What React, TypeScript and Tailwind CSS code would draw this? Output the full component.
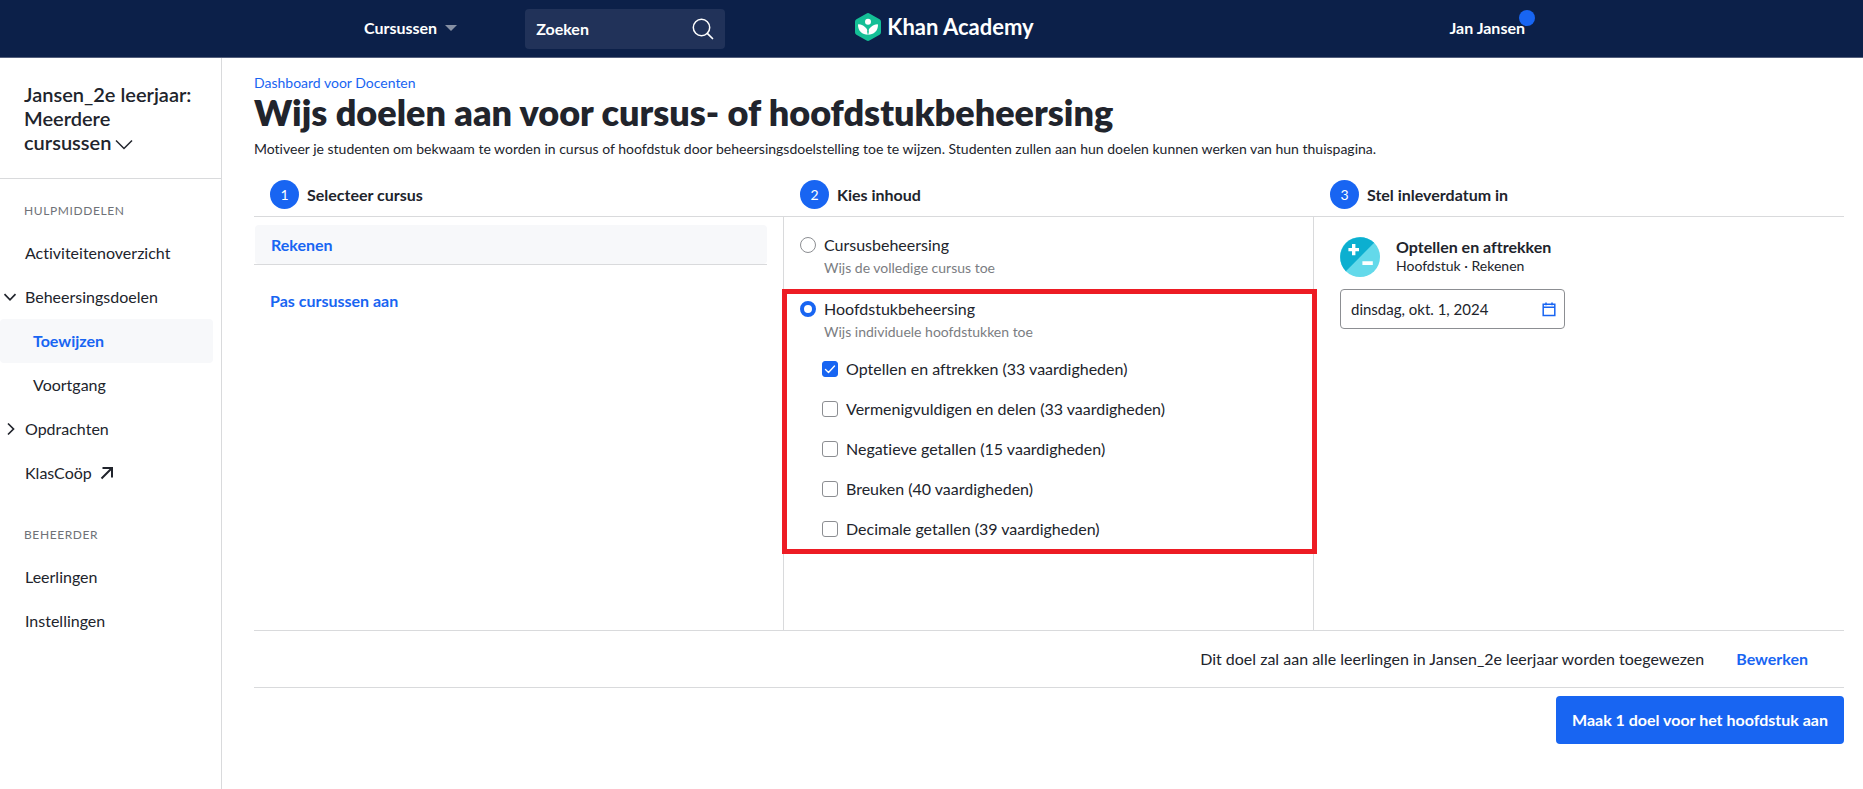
import { useState } from "react";
import type { ReactNode } from "react";

const UNITS = [
  "Optellen en aftrekken (33 vaardigheden)",
  "Vermenigvuldigen en delen (33 vaardigheden)",
  "Negatieve getallen (15 vaardigheden)",
  "Breuken (40 vaardigheden)",
  "Decimale getallen (39 vaardigheden)",
];

function Logo() {
  return (
    <a href="#" className="flex items-center gap-[6px] pb-1 text-[22px] leading-6 font-bold text-white">
      <svg viewBox="0 0 26 28" className="h-7 w-[26px]" aria-hidden="true">
        <path
          d="M11.6.4a2.8 2.8 0 0 1 2.8 0l10.200 5.900a2.800 2.800 0 0 1 1.400 2.400v10.600a2.800 2.800 0 0 1-1.400 2.400l-10.200 5.900a2.800 2.800 0 0 1-2.800 0l-10.200-5.900A2.800 2.800 0 0 1 0 19.300V8.700a2.800 2.800 0 0 1 1.400-2.400z"
          fill="#14bf96"
        />
        <circle cx="13" cy="8.800" r="3" fill="#fff" />
        <path
          d="M13 21.800c-5.800 0-10-4-10-9.800 0-.6.2-.8.800-.7 4.600.6 8 3.300 9.200 7.400 1.200-4.100 4.600-6.800 9.200-7.400.6-.1.800.1.800.7 0 5.800-4.200 9.800-10 9.800z"
          fill="#fff"
        />
        <path d="M13 22.400l-.9-3.600.9-3.300.9 3.300z" fill="#14bf96" />
      </svg>
      <span>Khan Academy</span>
    </a>
  );
}

function Header() {
  return (
    <header className="flex h-[58px] justify-center border-b border-[#545f7c] bg-[#0c2049] pl-[26px]">
      <div className="grid w-full max-w-[1161px] grid-cols-[1fr_auto_1fr] items-center">
        <div className="flex items-center gap-[68px]">
          <button className="flex items-center gap-2 pb-[2px] text-base leading-5 font-bold text-white">
            Cursussen
            <svg viewBox="0 0 12 6" className="h-[6px] w-3" aria-hidden="true">
              <path d="M0 0h12L6 6z" fill="#8690a4" />
            </svg>
          </button>
          <div className="flex h-10 w-[200px] items-center rounded bg-[#213259] px-[11px]">
            <input
              aria-label="Zoeken"
              placeholder="Zoeken"
              className="w-full min-w-0 bg-transparent text-base font-bold text-white outline-none placeholder:text-white"
            />
            <svg viewBox="0 0 22 22" className="h-[22px] w-[22px] shrink-0" fill="none" stroke="#fff" aria-hidden="true">
              <circle cx="9.500" cy="9.500" r="8.200" strokeWidth="1.500" />
              <path d="M15.300 15.300l5.200 5.200" strokeWidth="1.700" strokeLinecap="round" />
            </svg>
          </div>
        </div>
        <Logo />
        <button className="relative justify-self-end pb-[2px] text-base leading-5 font-bold text-white">
          Jan Jansen
          <span className="absolute -top-2 -right-[10px] h-4 w-4 rounded-full bg-[#1865f2]" />
        </button>
      </div>
    </header>
  );
}

function Chevron({ open }: { open: boolean }) {
  return (
    <svg viewBox="0 0 14 14" className="h-[14px] w-[14px]" fill="none" stroke="#21242c" strokeWidth="1.700" aria-hidden="true">
      <path d={open ? "M1.500 4.200L7 9.800l5.500-5.600" : "M5 1.500l5.500 5.500L5 12.500"} />
    </svg>
  );
}

function NavItem({ children, icon, sub, active }: { children: ReactNode; icon?: ReactNode; sub?: boolean; active?: boolean }) {
  return (
    <li>
      <a
        href="#"
        className={`mr-2 flex h-11 items-center rounded text-base leading-5 ${sub ? "pl-[33px]" : ""} ${
          active ? "bg-[#f7f8fa] font-bold text-[#1865f2]" : "text-[#21242c]"
        }`}
      >
        {!sub && <span className="flex w-[25px] shrink-0 pl-[3px]">{icon}</span>}
        {children}
      </a>
    </li>
  );
}

function Sidebar() {
  return (
    <aside className="w-[222px] shrink-0 border-r border-[#d9dadc]">
      <button className="block w-full border-b border-[#d9dadc] p-6 text-left text-xl leading-6 font-semibold">
        Jansen_2e leerjaar:
        <br />
        Meerdere
        <br />
        cursussen
        <svg viewBox="0 0 18 12" className="ml-1 inline h-3 w-[18px]" fill="none" stroke="#21242c" strokeWidth="1.500" aria-hidden="true">
          <path d="M1 1.500l8 8 8-8" />
        </svg>
      </button>
      <nav className="pt-6">
        <h2 className="pl-6 text-xs tracking-wider text-[#6f7278]">HULPMIDDELEN</h2>
        <ul className="mt-3">
          <NavItem>Activiteitenoverzicht</NavItem>
          <NavItem icon={<Chevron open />}>Beheersingsdoelen</NavItem>
          <NavItem sub active>
            Toewijzen
          </NavItem>
          <NavItem sub>Voortgang</NavItem>
          <NavItem icon={<Chevron open={false} />}>Opdrachten</NavItem>
          <NavItem>
            KlasCoöp
            <svg viewBox="0 0 14 14" className="ml-2 h-[14px] w-[14px]" fill="none" stroke="#21242c" strokeWidth="2" aria-hidden="true">
              <path d="M2.500 2H12v9.500M12 2L1.500 12.500" />
            </svg>
          </NavItem>
        </ul>
        <h2 className="mt-8 pl-6 text-xs tracking-wider text-[#6f7278]">BEHEERDER</h2>
        <ul className="mt-3">
          <NavItem>Leerlingen</NavItem>
          <NavItem>Instellingen</NavItem>
        </ul>
      </nav>
    </aside>
  );
}

function StepTitle({ n, children }: { n: number; children: ReactNode }) {
  return (
    <h2 className="flex items-center gap-2 pl-4 text-base leading-5 font-bold">
      <span className="flex h-[29px] w-[29px] items-center justify-center rounded-full bg-[#1865f2] text-sm font-normal text-white">
        {n}
      </span>
      {children}
    </h2>
  );
}

function Choice({ id, label, hint, checked, onChange }: { id: string; label: string; hint: string; checked: boolean; onChange: () => void }) {
  return (
    <label htmlFor={id} className="flex gap-2">
      <input
        id={id}
        type="radio"
        name="content"
        checked={checked}
        onChange={onChange}
        className="mt-[2px] h-4 w-4 shrink-0 appearance-none rounded-full border border-[#8c8e92] bg-white checked:border-4 checked:border-[#1865f2]"
      />
      <span>
        <span className="block text-base leading-5">{label}</span>
        <span className="mt-1 block text-sm leading-[18px] text-[#7b7d82]">{hint}</span>
      </span>
    </label>
  );
}

function UnitCheckbox({ id, label, checked, onChange }: { id: string; label: string; checked: boolean; onChange: () => void }) {
  return (
    <li>
      <label htmlFor={id} className="flex h-10 items-center gap-2 text-base leading-5">
        <span className="grid h-4 w-4 shrink-0 place-items-center">
          <input
            id={id}
            type="checkbox"
            checked={checked}
            onChange={onChange}
            className="col-start-1 row-start-1 h-4 w-4 appearance-none rounded-[3px] border border-[#8c8e92] bg-white checked:border-[#1865f2] checked:bg-[#1865f2]"
          />
          {checked && (
            <svg viewBox="0 0 16 16" className="pointer-events-none col-start-1 row-start-1 h-4 w-4" fill="none" stroke="#fff" strokeWidth="1.400" aria-hidden="true">
              <path d="M3.500 8.500l3 2.900 6-6.400" strokeLinecap="round" strokeLinejoin="round" />
            </svg>
          )}
        </span>
        {label}
      </label>
    </li>
  );
}

function ContentStep() {
  const [mode, setMode] = useState("unit");
  const [selected, setSelected] = useState([0]);
  const toggle = (i: number) => setSelected((s) => (s.includes(i) ? s.filter((x) => x !== i) : [...s, i]));

  return (
    <section className="border-r border-[#d9dadc] pt-[18px]">
      <div className="pl-4">
        <Choice id="mode-course" label="Cursusbeheersing" hint="Wijs de volledige cursus toe" checked={mode === "course"} onChange={() => setMode("course")} />
      </div>
      <div className="relative mt-3 pt-[10px] pb-[5px] pl-4">
        <div className="pointer-events-none absolute inset-y-0 -right-1 -left-[2px] border-[5px] border-[#ed1c24]" />
        <Choice id="mode-unit" label="Hoofdstukbeheersing" hint="Wijs individuele hoofdstukken toe" checked={mode === "unit"} onChange={() => setMode("unit")} />
        <ul className="mt-2 pl-[22px]">
          {UNITS.map((u, i) => (
            <UnitCheckbox key={u} id={`unit-${i}`} label={u} checked={selected.includes(i)} onChange={() => toggle(i)} />
          ))}
        </ul>
      </div>
    </section>
  );
}

function DueDateStep() {
  return (
    <section className="pt-5 pl-[26px]">
      <div className="flex items-center gap-4">
        <svg viewBox="0 0 40 40" className="h-10 w-10" aria-hidden="true">
          <circle cx="20" cy="20" r="20" fill="#63d9ea" />
          <path d="M34.140 5.860A20 20 0 0 0 5.860 34.140z" fill="#0cafd0" />
          <path d="M12 7h3.400v4H19v3.200h-3.600v4H12v-4H8.400V11H12zM22.400 24.200h10.400V28H22.400z" fill="#fff" />
        </svg>
        <div className="pb-[2px]">
          <h3 className="text-base leading-5 font-bold">Optellen en aftrekken</h3>
          <p className="text-sm leading-[18px]">Hoofdstuk · Rekenen</p>
        </div>
      </div>
      <div className="mt-3 flex h-10 w-[225px] items-center rounded border border-[#8c8e92] pr-2 pl-[10px]">
        <input aria-label="Inleverdatum" defaultValue="dinsdag, okt. 1, 2024" className="w-full min-w-0 bg-transparent text-[15px] outline-none" />
        <svg viewBox="0 0 14 15" className="h-[15px] w-[14px] shrink-0" fill="none" stroke="#1865f2" strokeWidth="1.500" aria-hidden="true">
          <path d="M1.200 2.300h11.600v11.200H1.200zM1.200 5.200h11.600M4 .5v2.800M10 .5v2.800" />
        </svg>
      </div>
    </section>
  );
}

export default function App() {
  return (
    <div className="flex min-h-screen flex-col bg-white font-[Lato,sans-serif] text-[#21242c] [font-variant-ligatures:none]">
      <Header />
      <div className="flex flex-1">
        <Sidebar />
        <main className="min-w-0 flex-1 pt-4 pr-[19px] pl-8">
          <a href="#" className="block text-sm leading-[18px] text-[#1865f2]">
            Dashboard voor Docenten
          </a>
          <h1 className="text-4xl leading-10 font-extrabold">Wijs doelen aan voor cursus- of hoofdstukbeheersing</h1>
          <p className="mt-[7px] text-sm leading-5">
            Motiveer je studenten om bekwaam te worden in cursus of hoofdstuk door beheersingsdoelstelling toe te wijzen. Studenten zullen aan hun doelen kunnen werken van hun thuispagina.
          </p>
          <div className="mt-[21px] grid grid-cols-3 border-b border-[#d9dadc] pb-[7px]">
            <StepTitle n={1}>Selecteer cursus</StepTitle>
            <StepTitle n={2}>Kies inhoud</StepTitle>
            <StepTitle n={3}>Stel inleverdatum in</StepTitle>
          </div>
          <div className="grid min-h-[413px] grid-cols-3">
            <section className="border-r border-[#d9dadc] pt-2 pr-4">
              <div className="border-b border-[#d9dadc] pl-px">
                <button className="flex h-[39px] w-full items-center rounded bg-[#f7f8fa] pl-4 text-base font-bold text-[#1865f2]">
                  Rekenen
                </button>
              </div>
              <a href="#" className="mt-[26px] ml-4 inline-block text-base leading-5 font-bold text-[#1865f2]">
                Pas cursussen aan
              </a>
            </section>
            <ContentStep />
            <DueDateStep />
          </div>
          <div className="flex h-[58px] items-center justify-end gap-8 border-y border-[#d9dadc] pr-9 text-base">
            <p>Dit doel zal aan alle leerlingen in Jansen_2e leerjaar worden toegewezen</p>
            <button className="font-bold text-[#1865f2]">Bewerken</button>
          </div>
          <div className="flex justify-end pt-2">
            <button className="h-12 rounded bg-[#1865f2] px-4 text-base font-bold text-white">Maak 1 doel voor het hoofdstuk aan</button>
          </div>
        </main>
      </div>
    </div>
  );
}
